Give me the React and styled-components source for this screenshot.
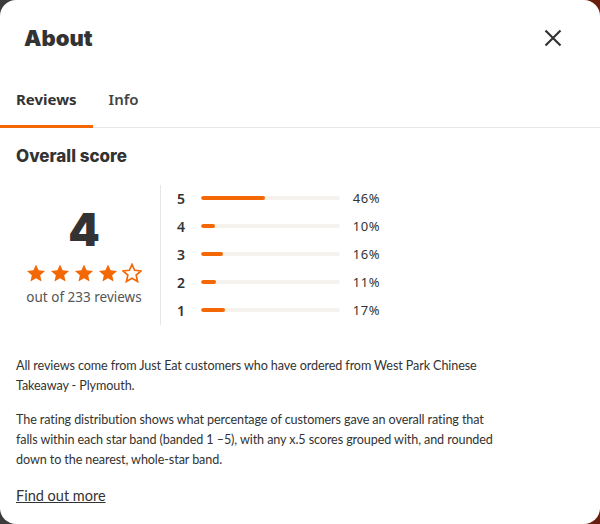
import React from 'react';
import styled, { createGlobalStyle } from 'styled-components';

const GlobalStyle = createGlobalStyle`
  html, body {
    margin: 0;
    padding: 0;
  }
  body {
    background: linear-gradient(90deg, #3c3c3c 0%, #5a4a44 60%, #6a1d0c 100%);
    font-family: "Noto Sans", "Open Sans", sans-serif;
  }
`;

const distribution = [
  { star: 5, pct: 46 },
  { star: 4, pct: 10 },
  { star: 3, pct: 16 },
  { star: 2, pct: 11 },
  { star: 1, pct: 17 },
];

function Star({ filled }) {
  return (
    <svg width="20" height="20" viewBox="0 0 24 23">
      <path
        d="M12 1.2l3.1 7.1 7.7.7-5.8 5.1 1.7 7.6L12 17.7l-6.7 4 1.7-7.6L1.2 9l7.7-.7z"
        fill={filled ? '#f36805' : '#fff'}
        stroke="#f36805"
        strokeWidth={filled ? 0 : 2}
        strokeLinejoin="miter"
      />
    </svg>
  );
}

export default function App() {
  return (
    <>
      <GlobalStyle />
      <Modal>
        <Header>
          <Title>About</Title>
          <Close aria-label="Close">
            <svg width="18" height="18" viewBox="0 0 18 18">
              <path d="M1.5 1.5l15 15M16.5 1.5l-15 15" stroke="#333" strokeWidth="2.2" />
            </svg>
          </Close>
        </Header>
        <Tabs>
          <Tab active>Reviews</Tab>
          <Tab>Info</Tab>
        </Tabs>
        <Body>
          <SectionTitle>Overall score</SectionTitle>
          <Score>
            <Summary>
              <Big>4</Big>
              <Stars>
                {[1, 2, 3, 4, 5].map((n) => (
                  <Star key={n} filled={n <= 4} />
                ))}
              </Stars>
              <Count>out of 233 reviews</Count>
            </Summary>
            <Bars>
              {distribution.map((d) => (
                <BarRow key={d.star}>
                  <BarLabel>{d.star}</BarLabel>
                  <Track>
                    <Fill style={{ width: `${d.pct}%` }} />
                  </Track>
                  <Pct>{d.pct}%</Pct>
                </BarRow>
              ))}
            </Bars>
          </Score>
          <Para>
            All reviews come from Just Eat customers who have ordered from West Park Chinese
            Takeaway - Plymouth.
          </Para>
          <Para>
            The rating distribution shows what percentage of customers gave an overall rating that
            falls within each star band (banded 1 –5), with any x.5 scores grouped with, and rounded
            down to the nearest, whole-star band.
          </Para>
          <More href="#">Find out more</More>
        </Body>
      </Modal>
    </>
  );
}

const Modal = styled.div`
  width: 600px;
  height: 524px;
  background: #fff;
  border-radius: 16px;
  overflow: hidden;
  color: #333;
  box-sizing: border-box;
`;

const Header = styled.div`
  display: flex;
  align-items: center;
  justify-content: space-between;
  height: 75px;
  padding: 0 38px 0 24px;
`;

const Title = styled.h1`
  margin: 0;
  font-family: "Inter", sans-serif;
  font-weight: 900;
  font-size: 22px;
  color: #333;
`;

const Close = styled.button`
  border: 0;
  background: none;
  padding: 0;
  display: flex;
  cursor: pointer;
`;

const Tabs = styled.div`
  display: flex;
  border-bottom: 1px solid #e6e6e6;
`;

const Tab = styled.div`
  padding: 14px 16px 16px;
  font-family: "Noto Sans", sans-serif;
  font-size: 15px;
  font-weight: ${(p) => (p.active ? 700 : 600)};
  color: ${(p) => (p.active ? '#333' : '#444')};
  border-bottom: 3px solid ${(p) => (p.active ? '#f36805' : 'transparent')};
  margin-bottom: -1px;
`;

const Body = styled.div`
  padding: 0 16px;
`;

const SectionTitle = styled.h2`
  margin: 18px 0 0;
  font-family: "Inter", sans-serif;
  font-weight: 800;
  font-size: 17px;
  color: #333;
`;

const Score = styled.div`
  display: flex;
  margin-top: 19px;
`;

const Summary = styled.div`
  width: 136px;
  padding-right: 8px;
  display: flex;
  flex-direction: column;
  align-items: center;
  justify-content: center;
  border-right: 1px solid #e6e6e6;
  height: 140px;
`;

const Big = styled.div`
  font-family: "Inter", sans-serif;
  font-weight: 900;
  font-size: 45px;
  line-height: 44px;
  margin-top: 4px;
  color: #333;
`;

const Stars = styled.div`
  display: flex;
  gap: 4px;
  margin-top: 11px;
`;

const Count = styled.div`
  font-size: 13.5px;
  color: #555;
  margin-top: 5px;
`;

const Bars = styled.div`
  display: flex;
  flex-direction: column;
  gap: 8px;
  padding: 3px 0 0 16px;
`;

const BarRow = styled.div`
  display: flex;
  align-items: center;
  height: 20px;
`;

const BarLabel = styled.div`
  width: 24px;
  font-size: 14px;
  font-weight: 600;
  color: #333;
`;

const Track = styled.div`
  width: 139px;
  height: 4px;
  border-radius: 2px;
  background: #f5f2ee;
  overflow: hidden;
`;

const Fill = styled.div`
  height: 100%;
  border-radius: 2px;
  background: #f36805;
`;

const Pct = styled.div`
  width: 40px;
  text-align: right;
  font-size: 13px;
  color: #333;
  letter-spacing: 0.5px;
`;

const Para = styled.p`
  margin: 31px 0 0;
  max-width: 488px;
  font-family: "Lato", "Noto Sans", sans-serif;
  font-size: 12.6px;
  letter-spacing: -0.1px;
  line-height: 20px;
  color: #333;
  & + & {
    margin-top: 14px;
  }
`;

const More = styled.a`
  display: inline-block;
  margin-top: 17px;
  font-family: "Lato", "Noto Sans", sans-serif;
  font-size: 14.5px;
  color: #333;
  text-decoration: underline;
`;
